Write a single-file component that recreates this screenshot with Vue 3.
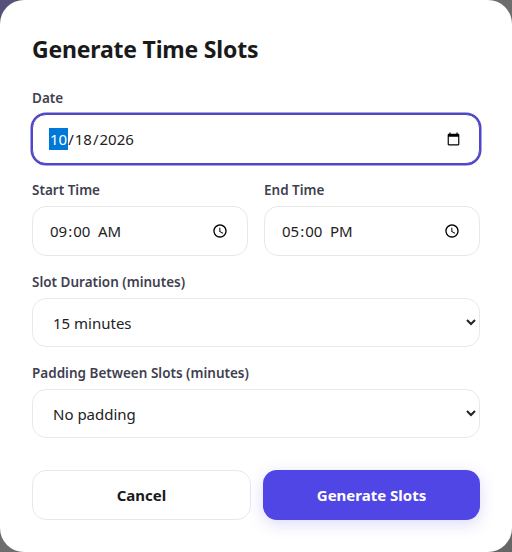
<script setup>
import { ref, onMounted } from 'vue'

const dateInput = ref(null)
const date = ref('2026-10-18')
const startTime = ref('09:00')
const endTime = ref('17:00')
const duration = ref('15')
const padding = ref('0')

const durations = [
  { value: '15', label: '15 minutes' },
  { value: '30', label: '30 minutes' },
  { value: '60', label: '60 minutes' },
]
const paddings = [
  { value: '0', label: 'No padding' },
  { value: '5', label: '5 minutes' },
  { value: '10', label: '10 minutes' },
]

onMounted(() => dateInput.value.focus())
</script>

<template>
  <div class="backdrop">
    <form class="modal" @submit.prevent>
      <h2 class="modal-title">Generate Time Slots</h2>

      <div class="field">
        <label class="field-label" for="slot-date">Date</label>
        <input id="slot-date" ref="dateInput" v-model="date" class="field-input" type="date" />
      </div>

      <div class="field-row">
        <div class="field">
          <label class="field-label" for="slot-start">Start Time</label>
          <input id="slot-start" v-model="startTime" class="field-input" type="time" />
        </div>
        <div class="field">
          <label class="field-label" for="slot-end">End Time</label>
          <input id="slot-end" v-model="endTime" class="field-input" type="time" />
        </div>
      </div>

      <div class="field">
        <label class="field-label" for="slot-duration">Slot Duration (minutes)</label>
        <select id="slot-duration" v-model="duration" class="field-input field-select">
          <option v-for="d in durations" :key="d.value" :value="d.value">{{ d.label }}</option>
        </select>
      </div>

      <div class="field">
        <label class="field-label" for="slot-padding">Padding Between Slots (minutes)</label>
        <select id="slot-padding" v-model="padding" class="field-input field-select">
          <option v-for="p in paddings" :key="p.value" :value="p.value">{{ p.label }}</option>
        </select>
      </div>

      <div class="modal-actions">
        <button type="button" class="btn btn-cancel">Cancel</button>
        <button type="submit" class="btn btn-primary">Generate Slots</button>
      </div>
    </form>
  </div>
</template>

<style>
html, body {
  margin: 0;
  background: #666;
}

input[type="date"]:focus::-webkit-datetime-edit-month-field {
  background-color: #0078d7;
  color: #fff;
}

input::-webkit-datetime-edit-ampm-field {
  margin-left: 3px;
}
</style>

<style scoped>
.backdrop {
  width: 512px;
  height: 552px;
  overflow: hidden;
  background: linear-gradient(135deg, #55507a 0%, #6e6e6e 50%, #666 100%);
}

.modal {
  box-sizing: border-box;
  height: 552px;
  padding: 32px;
  background: #fff;
  border-radius: 24px;
  font-family: 'Noto Sans', sans-serif;
}

.modal-title {
  margin: 0 0 24px;
  font-size: 23px;
  line-height: 34px;
  font-weight: 700;
  letter-spacing: -0.2px;
  color: #1a1a1a;
}

.field {
  display: flex;
  flex-direction: column;
  gap: 7px;
  margin-bottom: 18px;
  min-width: 0;
}

.field-label {
  font-size: 13.5px;
  line-height: 17px;
  font-weight: 600;
  color: #3f3f50;
}

.field-row {
  display: grid;
  grid-template-columns: 1fr 1fr;
  gap: 16px;
}

.field-input {
  box-sizing: border-box;
  width: 100%;
  height: 50px;
  padding: 0 16px;
  background: #fff;
  border: 1px solid #e8e8e8;
  border-radius: 14px;
  font-family: inherit;
  font-size: 15px;
  color: #222;
  outline: none;
}

.field-select {
  height: 49px;
}

.field-input:focus {
  border-color: #4f46c8;
  box-shadow: 0 0 0 1.5px #4f46c8;
}

.modal-actions {
  display: flex;
  gap: 12px;
  margin-top: 32px;
}

.btn {
  flex: 1;
  height: 50px;
  border-radius: 14px;
  font-family: inherit;
  font-size: 15px;
  font-weight: 700;
}

.btn-cancel {
  background: #fff;
  border: 1px solid #e8e8e8;
  color: #1a1a1a;
}

.btn-primary {
  background: #4f46e5;
  border: none;
  color: #fff;
  box-shadow: 0 4px 16px rgba(79, 70, 229, 0.2);
}
</style>
